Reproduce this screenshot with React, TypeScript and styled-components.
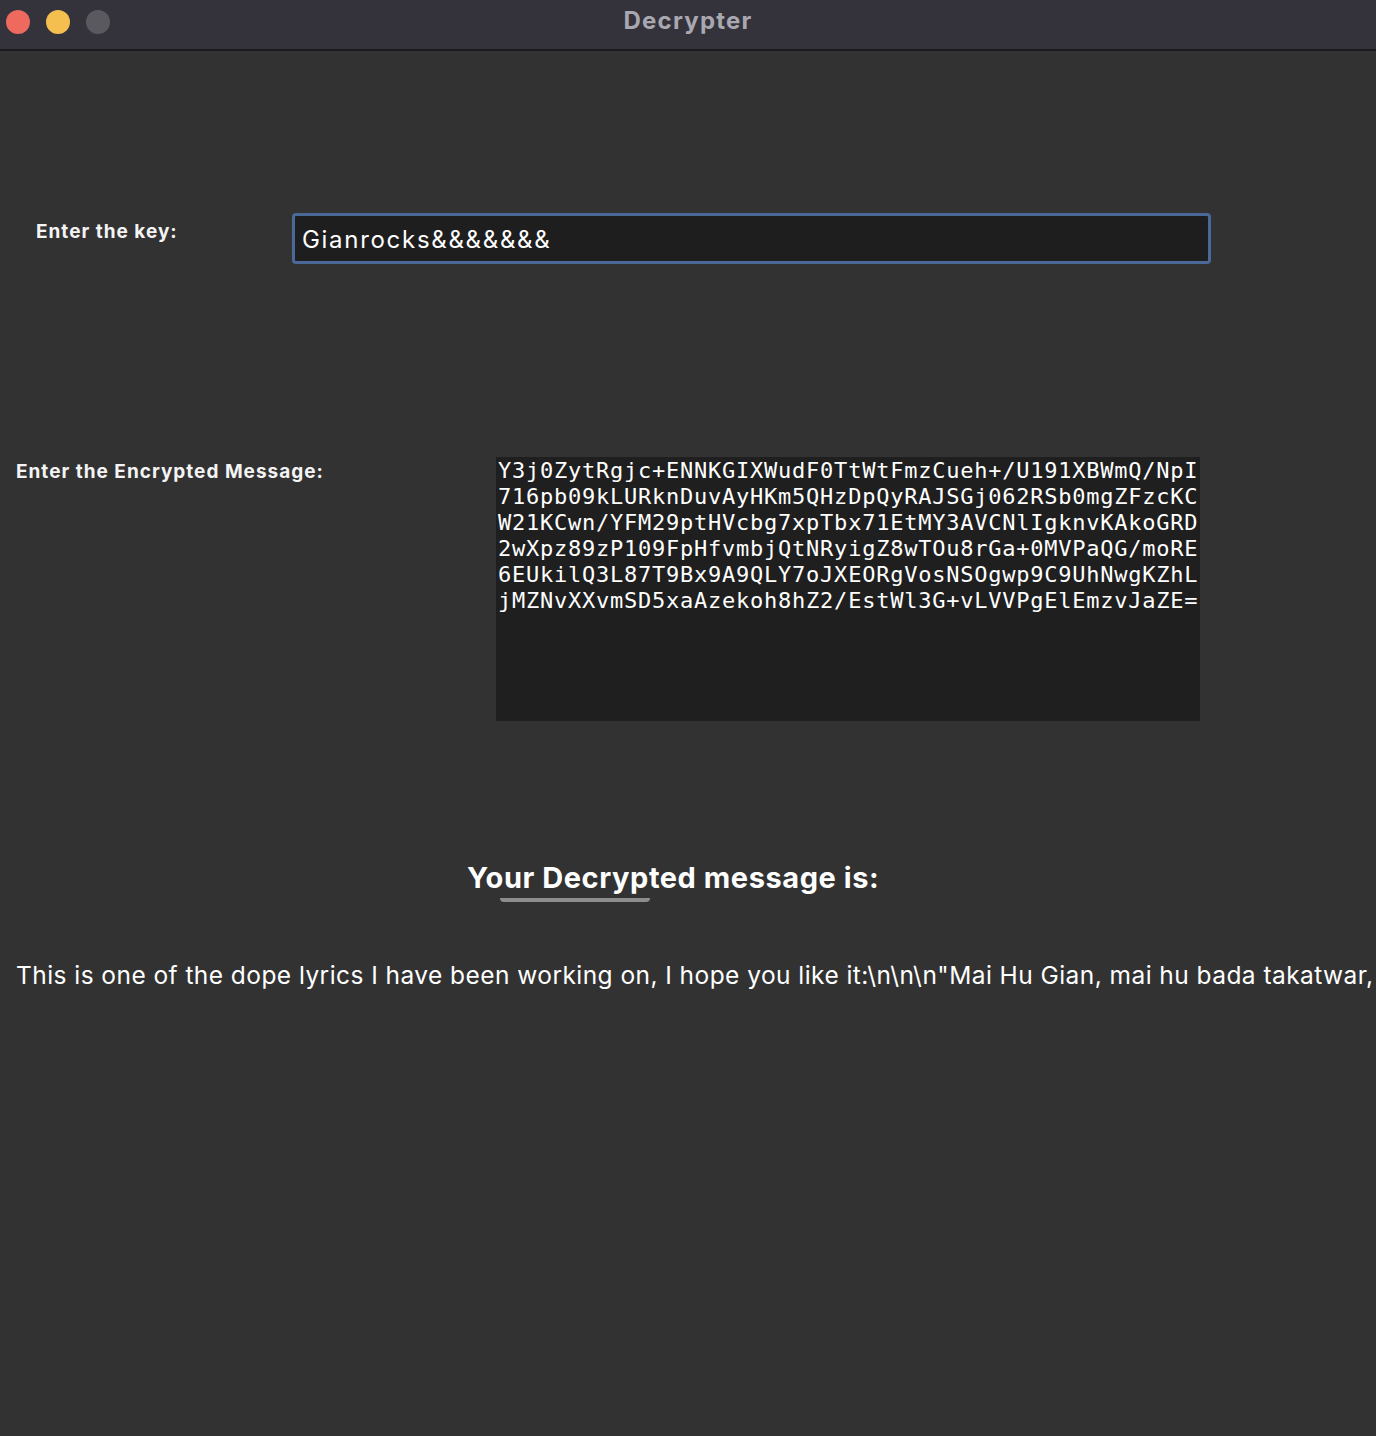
import React from 'react';
import styled, { createGlobalStyle } from 'styled-components';

const GlobalStyle = createGlobalStyle`
    html, body {
        margin: 0;
        padding: 0;
        background: #323232;
    }
    body {
        font-family: Inter, 'Noto Sans', 'Liberation Sans', sans-serif;
        color: #ffffff;
    }
`;

const ENCRYPTED_LINES = [
    'Y3j0ZytRgjc+ENNKGIXWudF0TtWtFmzCueh+/U191XBWmQ/NpI',
    '716pb09kLURknDuvAyHKm5QHzDpQyRAJSGj062RSb0mgZFzcKC',
    'W21KCwn/YFM29ptHVcbg7xpTbx71EtMY3AVCNlIgknvKAkoGRD',
    '2wXpz89zP109FpHfvmbjQtNRyigZ8wTOu8rGa+0MVPaQG/moRE',
    '6EUkilQ3L87T9Bx9A9QLY7oJXEORgVosNSOgwp9C9UhNwgKZhL',
    'jMZNvXXvmSD5xaAzekoh8hZ2/EstWl3G+vLVVPgElEmzvJaZE=',
];

const DECRYPTED =
    'This is one of the dope lyrics I have been working on, I hope you like it:\\n\\n\\n"Mai Hu Gian, mai hu bada takatwar,';

const Window = styled.div`
    min-height: 100vh;
    display: flex;
    flex-direction: column;
    background: #323232;
    overflow: hidden;
`;

const TitleBar = styled.div`
    height: 49px;
    display: grid;
    grid-template-columns: 1fr auto 1fr;
    align-items: center;
    background: #34333c;
    border-bottom: 2px solid #1b1b1d;
`;

const Lights = styled.div`
    display: flex;
    gap: 16px;
    padding-left: 6px;
    margin-top: -5px;
`;

const Light = styled.span<{ $color: string }>`
    width: 24px;
    height: 24px;
    border-radius: 50%;
    background: ${({ $color }) => $color};
`;

const Title = styled.div`
    font-size: 24px;
    font-weight: 700;
    color: #a9a8b0;
    margin-top: -8px;
    letter-spacing: 1.2px;
`;

const Content = styled.div`
    display: flex;
    flex-direction: column;
`;

const Row = styled.div<{ $top: number }>`
    display: flex;
    align-items: flex-start;
    margin-top: ${({ $top }) => $top}px;
`;

const FieldLabel = styled.label<{ $indent: number; $width: number; $offset: number }>`
    box-sizing: border-box;
    width: ${({ $width }) => $width}px;
    padding-left: ${({ $indent }) => $indent}px;
    margin-top: ${({ $offset }) => $offset}px;
    font-size: 19px;
    line-height: 22px;
    font-weight: 700;
    letter-spacing: 1px;
    color: #f4f4f4;
    flex-shrink: 0;
`;

const KeyInput = styled.input`
    box-sizing: border-box;
    width: 919px;
    height: 51px;
    padding: 2px 7px 0;
    border: 3px solid #4a6898;
    border-radius: 4px;
    background: #1e1e1e;
    color: #ffffff;
    font-family: Inter, 'Noto Sans', 'Liberation Sans', sans-serif;
    font-size: 24px;
    letter-spacing: 1.7px;
    outline: none;
`;

const MessageArea = styled.textarea`
    box-sizing: border-box;
    width: 704px;
    height: 264px;
    margin: 0;
    padding: 1px 2px;
    border: none;
    border-radius: 0;
    background: #1f1f1f;
    color: #ffffff;
    font-family: 'DejaVu Sans Mono', 'Liberation Mono', monospace;
    font-size: 22px;
    letter-spacing: 0.76px;
    line-height: 26px;
    white-space: pre;
    overflow: hidden;
    resize: none;
    outline: none;
`;

const HeadingBlock = styled.div`
    margin-top: 139px;
    display: flex;
    flex-direction: column;
    align-items: flex-start;
`;

const Heading = styled.h2`
    margin: 0 0 0 467px;
    font-size: 29px;
    line-height: 36px;
    font-weight: 700;
    letter-spacing: 0.55px;
    color: #ffffff;
    white-space: nowrap;
`;

const HeadingBar = styled.div`
    margin: 2px 0 0 500px;
    width: 150px;
    height: 4px;
    border-radius: 0 0 4px 4px;
    background: #8d8d8d;
`;

const Output = styled.p`
    margin: 58px 0 0 16px;
    font-size: 24.5px;
    line-height: 30px;
    letter-spacing: 0.44px;
    color: #ffffff;
    white-space: nowrap;
`;

export default function App() {
    return (
        <Window>
            <GlobalStyle />
            <TitleBar>
                <Lights>
                    <Light $color="#ee6a5f" />
                    <Light $color="#f5bf4f" />
                    <Light $color="#5a5960" />
                </Lights>
                <Title>Decrypter</Title>
                <div />
            </TitleBar>
            <Content>
                <Row $top={162}>
                    <FieldLabel $indent={36} $width={292} $offset={8}>
                        Enter the key:
                    </FieldLabel>
                    <KeyInput defaultValue="Gianrocks&&&&&&&" spellCheck={false} />
                </Row>
                <Row $top={193}>
                    <FieldLabel $indent={16} $width={496} $offset={4}>
                        Enter the Encrypted Message:
                    </FieldLabel>
                    <MessageArea
                        readOnly
                        spellCheck={false}
                        value={ENCRYPTED_LINES.join('\n')}
                    />
                </Row>
                <HeadingBlock>
                    <Heading>Your Decrypted message is:</Heading>
                    <HeadingBar />
                </HeadingBlock>
                <Output>{DECRYPTED}</Output>
            </Content>
        </Window>
    );
}
